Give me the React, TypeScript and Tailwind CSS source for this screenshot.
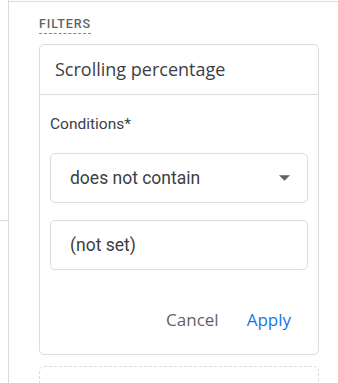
import { useState } from "react";

const BORDER = "border-[#dadce0]";
const SANS = { fontFamily: "'Open Sans', Roboto, sans-serif" };

function Field({ value, select }: { value: string; select?: boolean }) {
  return (
    <div
      className={`flex h-[50px] items-center justify-between rounded-[5px] border ${BORDER} pl-[19px] pr-[17px] text-[17.5px] text-[#3c4043]`}
    >
      <span>{value}</span>
      {select && (
        <svg width="11" height="6" viewBox="0 0 10 5" className="fill-[#5f6368]">
          <path d="M0 0h10L5 5z" />
        </svg>
      )}
    </div>
  );
}

export default function App() {
  const [op] = useState("does not contain");

  return (
    <div
      className="flex h-[383px] w-[338px] overflow-hidden bg-white"
      style={{ fontFamily: "Roboto, 'Liberation Sans', sans-serif" }}
    >
      {/* left rail */}
      <div className={`w-[9px] shrink-0 border-r ${BORDER}`}>
        <div className={`h-[221px] border-b ${BORDER}`} />
      </div>

      {/* filters panel */}
      <div className={`mt-px flex-1 border-t ${BORDER} pl-[30px] pr-[19px]`}>
        <div className="pt-[9px]">
          <span className="border-b border-dashed border-[#80868b] pb-[2px] text-[12.5px] font-medium tracking-[0.9px] text-[#5f6368]">
            FILTERS
          </span>
        </div>

        <div className={`mt-[9px] rounded-[5px] border ${BORDER}`}>
          <div
            className={`flex h-[50px] items-center border-b ${BORDER} pl-[15px] text-[18px] text-[#3c4043]`}
            style={SANS}
          >
            Scrolling percentage
          </div>
          <div className="px-[10px] pt-[20px] pb-[22px]">
            <div className="text-[15.5px] leading-[18px] text-[#3c4043]">Conditions*</div>
            <div className="mt-[20px]">
              <Field value={op} select />
            </div>
            <div className="mt-[17px]">
              <Field value="(not set)" />
            </div>
            <div
              className="mt-[38px] flex justify-end gap-[28px] pr-[17px] text-[17px] font-medium leading-[24px]"
              style={SANS}
            >
              <button className="text-[#5f6368]">Cancel</button>
              <button className="text-[#1a73e8]">Apply</button>
            </div>
          </div>
        </div>

        <div className="mt-[11px] h-[40px] rounded-[5px] border border-dashed border-[#dadce0]" />
      </div>
    </div>
  );
}
